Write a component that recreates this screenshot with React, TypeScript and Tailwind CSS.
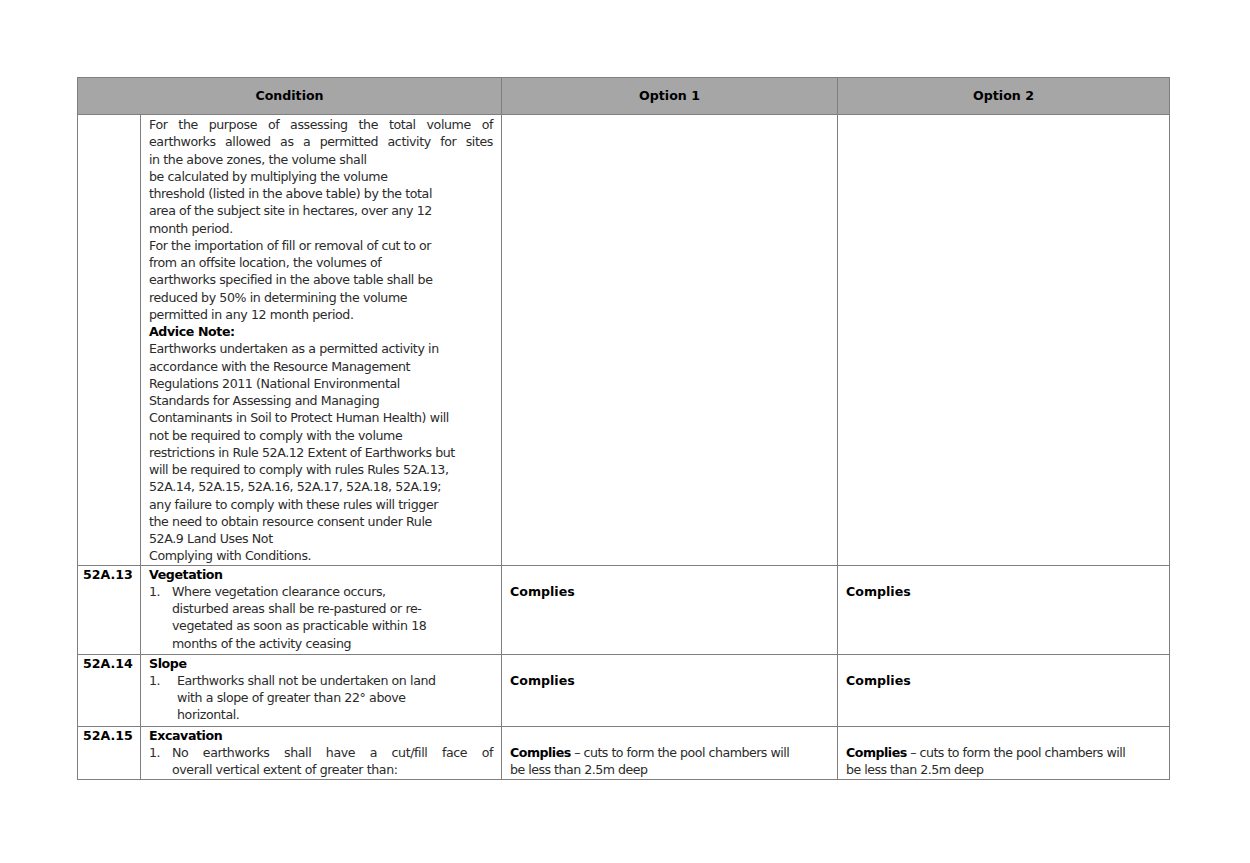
import React from "react";

const J = ({ t }: { t: string }) => (
  <div className="whitespace-nowrap [text-align-last:justify] text-justify">{t}</div>
);
const L = ({ t, b }: { t: string; b?: boolean }) => (
  <div className={"whitespace-nowrap " + (b ? "font-bold text-black" : "")}>{t}</div>
);

export default function App() {
  const first = [
    ["For the purpose of assessing the total volume of", 1],
    ["earthworks allowed as a permitted activity for sites", 1],
    ["in the above zones, the volume shall", 0],
    ["be calculated by multiplying the volume", 0],
    ["threshold (listed in the above table) by the total", 0],
    ["area of the subject site in hectares, over any 12", 0],
    ["month period.", 0],
    ["For the importation of fill or removal of cut to or", 0],
    ["from an offsite location, the volumes of", 0],
    ["earthworks specified in the above table shall be", 0],
    ["reduced by 50% in determining the volume", 0],
    ["permitted in any 12 month period.", 0],
    ["Advice Note:", 2],
    ["Earthworks undertaken as a permitted activity in", 0],
    ["accordance with the Resource Management", 0],
    ["Regulations 2011 (National Environmental", 0],
    ["Standards for Assessing and Managing", 0],
    ["Contaminants in Soil to Protect Human Health) will", 0],
    ["not be required to comply with the volume", 0],
    ["restrictions in Rule 52A.12 Extent of Earthworks but", 0],
    ["will be required to comply with rules Rules 52A.13,", 0],
    ["52A.14, 52A.15, 52A.16, 52A.17, 52A.18, 52A.19;", 0],
    ["any failure to comply with these rules will trigger", 0],
    ["the need to obtain resource consent under Rule", 0],
    ["52A.9 Land Uses Not", 0],
    ["Complying with Conditions.", 0],
  ] as [string, number][];
  const cell = "border border-[#7f7f7f] align-top";
  return (
    <div className="w-[1250px] h-[863px] bg-white pt-[77px] pl-[77px]" style={{ fontFamily: "'DejaVu Sans', sans-serif" }}>
      <table className="border-collapse text-[12.6px] leading-[17.25px] text-[#2b2b2b] table-fixed w-[1092px]">
        <colgroup>
          <col className="w-[63px]" />
          <col className="w-[361px]" />
          <col className="w-[336px]" />
          <col className="w-[332px]" />
        </colgroup>
        <tbody>
          <tr className="h-[37px] bg-[#a6a6a6] text-black font-semibold">
            <td colSpan={2} className={cell + " !align-middle text-center"}>Condition</td>
            <td className={cell + " !align-middle text-center"}>Option 1</td>
            <td className={cell + " !align-middle text-center"}>Option 2</td>
          </tr>
          <tr>
            <td className={cell}></td>
            <td className={cell + " px-[8px] pt-[1px] overflow-hidden tracking-[-0.4px]"}>
              {first.map(([t, k], i) => (k === 1 ? <J key={i} t={t} /> : <L key={i} t={t} b={k === 2} />))}
            </td>
            <td className={cell}></td>
            <td className={cell}></td>
          </tr>
          <tr className="h-[89px]">
            <td className={cell + " px-[5px] font-bold text-black"}>52A.13</td>
            <td className={cell + " px-[8px] tracking-[-0.4px]"}>
              <L t="Vegetation" b />
              <div className="flex"><span className="w-[23px]">1.</span><div><L t="Where vegetation clearance occurs," /><L t="disturbed areas shall be re-pastured or re-" /><L t="vegetated as soon as practicable within 18" /><L t="months of the activity ceasing" /></div></div>
            </td>
            <td className={cell + " px-[8px] pt-[17px] font-bold text-black"}>Complies</td>
            <td className={cell + " px-[8px] pt-[17px] font-bold text-black"}>Complies</td>
          </tr>
          <tr className="h-[72px]">
            <td className={cell + " px-[5px] font-bold text-black"}>52A.14</td>
            <td className={cell + " px-[8px] tracking-[-0.4px]"}>
              <L t="Slope" b />
              <div className="flex"><span className="w-[28px]">1.</span><div><L t="Earthworks shall not be undertaken on land" /><L t="with a slope of greater than 22° above" /><L t="horizontal." /></div></div>
            </td>
            <td className={cell + " px-[8px] pt-[17px] font-bold text-black"}>Complies</td>
            <td className={cell + " px-[8px] pt-[17px] font-bold text-black"}>Complies</td>
          </tr>
          <tr className="h-[53px]">
            <td className={cell + " px-[5px] font-bold text-black"}>52A.15</td>
            <td className={cell + " px-[8px] tracking-[-0.4px]"}>
              <L t="Excavation" b />
              <div className="flex"><span className="w-[23px] shrink-0">1.</span><div className="flex-1"><J t="No earthworks shall have a cut/fill face of" /><L t="overall vertical extent of greater than:" /></div></div>
            </td>
            {[0, 1].map((i) => (
              <td key={i} className={cell + " px-[8px] pt-[17px] tracking-[-0.5px] overflow-hidden"}>
                <div className="whitespace-nowrap"><b className="text-black">Complies</b> – cuts to form the pool chambers will</div>
                <div>be less than 2.5m deep</div>
              </td>
            ))}
          </tr>
        </tbody>
      </table>
    </div>
  );
}
